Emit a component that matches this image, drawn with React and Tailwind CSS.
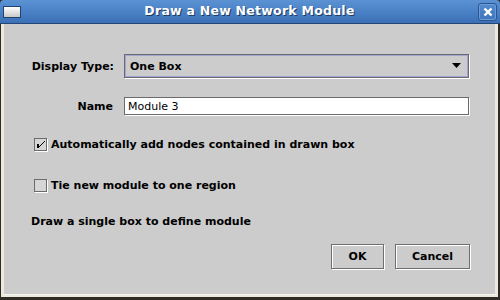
import React from 'react';

/* Metal-style dialog: Draw a New Network Module */

const Check = ({ checked }) => (
  <div className="w-[13px] h-[13px] shrink-0 border border-[#6b6b6b] bg-[#d6d6d6] shadow-[1px_1px_0_#ffffff] flex items-center justify-center">
    {checked && (
      <svg width="9" height="9" viewBox="0 0 9 9">
        <path d="M1 4h2v2h1V5h1V4h1V3h1V2h1V1h1v1H8v1H7v1H6v1H5v1H4v1H3v1H1z" fill="#000" />
      </svg>
    )}
  </div>
);

const Button = ({ children, w }) => (
  <button
    className={`${w} h-[25px] border border-[#6f6f6f] bg-[#cccccc] shadow-[1px_1px_0_#ffffff,inset_1px_1px_0_#ffffff] text-[11px] font-bold text-black flex items-center justify-center`}
  >
    {children}
  </button>
);

export default function App() {
  return (
    <div
      className="w-[500px] h-[300px] flex flex-col bg-[#2f2b26] overflow-hidden"
      style={{ fontFamily: "'DejaVu Sans', sans-serif" }}
    >
      {/* title bar */}
      <div className="h-[24px] shrink-0 rounded-t-[4px] bg-gradient-to-b from-[#5a92d4] to-[#3b70b6] border-b border-[#24477a] flex items-center">
        <div className="ml-[3px] w-[18px] h-[12px] border border-[#22426e] bg-gradient-to-b from-[#ffffff] to-[#c9c9c9]" />
        <div className="flex-1 text-center text-white font-bold text-[12.5px] tracking-[0.25px] [text-shadow:1px_1px_0_#1d3a63]">
          Draw a New Network Module
        </div>
        <div className="mr-[3px] w-[19px] h-[18px] rounded-[3px] border border-[#2b558c] shadow-[inset_0_0_0_1px_#6b9cd8] flex items-center justify-center">
          <svg width="10" height="10" viewBox="0 0 10 10">
            <path d="M1.5 1.5l7 7M8.5 1.5l-7 7" stroke="#fff" strokeWidth="2.4" />
          </svg>
        </div>
      </div>

      {/* body */}
      <div className="flex-1 flex ml-[1px] mr-[2px] mb-[3px] bg-[#ece9df] pl-[3px] pr-[3px] pb-[2px]">
        <div className="flex-1 bg-[#cccccc] border-b border-[#f6f4ee] text-black text-[11px] leading-[13px] font-bold flex flex-col">
          <div className="flex items-center mt-[30px] h-[24px]">
            <div className="w-[110px] text-right">Display Type:</div>
            <div className="ml-[10px] w-[345px] h-[24px] border border-[#6b6b6b] shadow-[1px_1px_0_#ffffff] flex">
              <div className="flex-1 border border-[#a3a3d6] flex items-center justify-between pl-[4px] pr-[5px]">
                <span>One Box</span>
                <svg width="10" height="6" viewBox="0 0 10 6">
                  <path d="M0 0h9L4.5 5z" fill="#000" />
                </svg>
              </div>
            </div>
          </div>

          <div className="flex items-center mt-[19px] h-[18px]">
            <div className="w-[109px] text-right">Name</div>
            <div className="ml-[11px] w-[345px] h-[18px] bg-white border border-[#6b6b6b] shadow-[1px_1px_0_#ffffff] flex items-center pl-[3px] font-normal">
              Module 3
            </div>
          </div>

          <div className="flex items-center gap-[4px] ml-[30px] mt-[23px] h-[13px]">
            <Check checked />
            <span>Automatically add nodes contained in drawn box</span>
          </div>

          <div className="flex items-center gap-[4px] ml-[30px] mt-[28px] h-[13px]">
            <Check />
            <span>Tie new module to one region</span>
          </div>

          <div className="ml-[27px] mt-[23px] h-[13px]">Draw a single box to define module</div>

          <div className="flex justify-end gap-[11px] mr-[25px] mt-[16px]">
            <Button w="w-[53px]">OK</Button>
            <Button w="w-[75px]">Cancel</Button>
          </div>
        </div>
      </div>
    </div>
  );
}
